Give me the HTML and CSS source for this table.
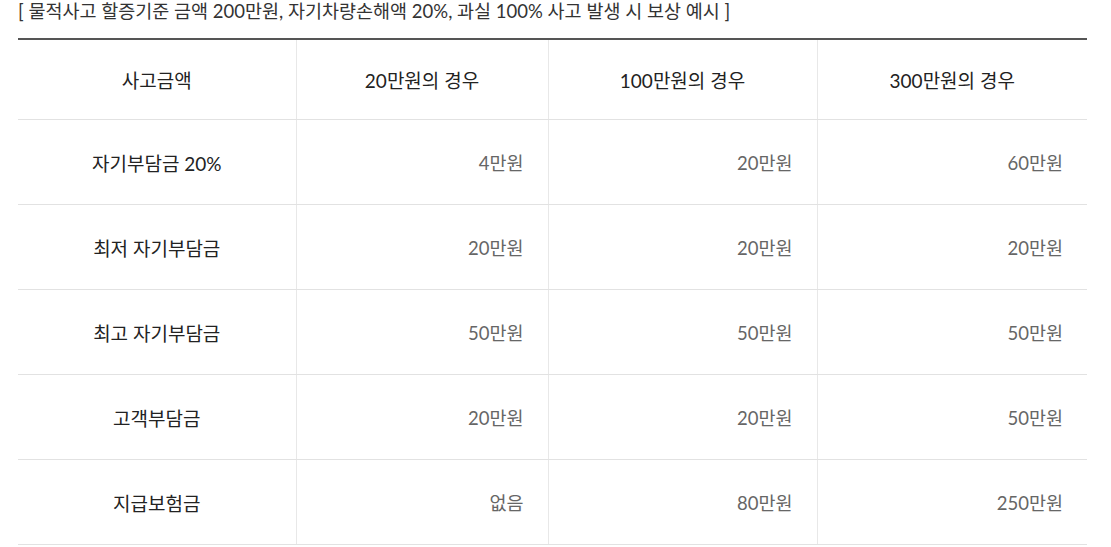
FILE: index.html
```html
<!DOCTYPE html>
<html lang="ko">
<head>
<meta charset="utf-8">
<link rel="stylesheet" href="styles.css">
</head>
<body>
<div class="wrap">
  <p class="caption">[ 물적사고 할증기준 금액 200만원, 자기차량손해액 20%, 과실 100% 사고 발생 시 보상 예시 ]</p>
  <table class="tbl">
    <colgroup>
      <col class="c1"><col class="c2"><col class="c3"><col class="c4">
    </colgroup>
    <thead>
      <tr><th>사고금액</th><th>20만원의 경우</th><th>100만원의 경우</th><th>300만원의 경우</th></tr>
    </thead>
    <tbody>
      <tr><th>자기부담금 20%</th><td>4만원</td><td>20만원</td><td>60만원</td></tr>
      <tr><th>최저 자기부담금</th><td>20만원</td><td>20만원</td><td>20만원</td></tr>
      <tr><th>최고 자기부담금</th><td>50만원</td><td>50만원</td><td>50만원</td></tr>
      <tr><th>고객부담금</th><td>20만원</td><td>20만원</td><td>50만원</td></tr>
      <tr><th>지급보험금</th><td>없음</td><td>80만원</td><td>250만원</td></tr>
    </tbody>
  </table>
</div>
</body>
</html>
```

FILE: styles.css
```css
html, body {
  margin: 0;
  padding: 0;
  background: #fff;
}
body {
  font-family: "Lato", "Noto Sans CJK KR", sans-serif;
  color: #222;
}
.wrap {
  padding: 0 24px 0 18px;
}
.caption {
  margin: 0;
  height: 38px;
  padding-top: 0;
  box-sizing: border-box;
  font-size: 18.5px;
  line-height: 22px;
  color: #333;
}
.tbl {
  width: 1069px;
  border-collapse: collapse;
  table-layout: fixed;
  border-top: 2px solid #555;
}
.c1 { width: 278px; }
.c2 { width: 252px; }
.c3 { width: 269px; }
.c4 { width: 270px; }
.tbl th, .tbl td {
  border-bottom: 1px solid #e2e2e2;
  border-left: 1px solid #e8e8e8;
  padding: 0;
}
.tbl tr > :first-child {
  border-left: none;
}
.tbl thead th {
  height: 79px;
  font-size: 19px;
  font-weight: 400;
  color: #222;
  text-align: center;
}
.tbl tbody th {
  height: 84px;
  font-size: 19px;
  font-weight: 400;
  color: #222;
  text-align: center;
}
.tbl tbody td {
  height: 84px;
  font-size: 18.5px;
  text-align: right;
  padding-right: 24px;
  color: #666;
}
```
